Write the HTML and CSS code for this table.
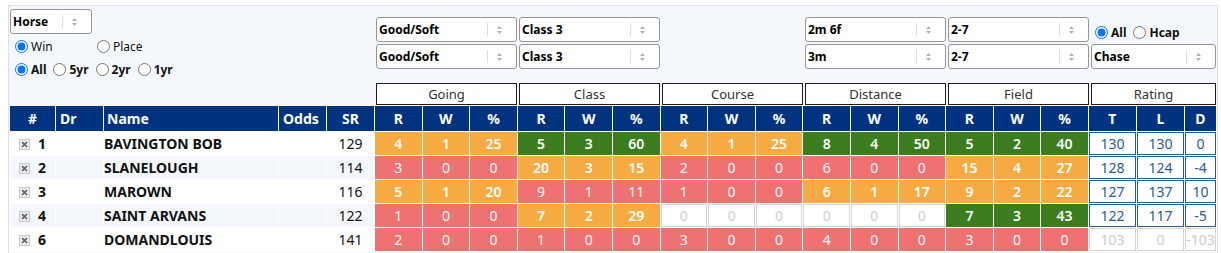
FILE: index.html
```html
<!DOCTYPE html>
<html>
<head>
<meta charset="utf-8">
<link rel="stylesheet" href="styles.css">
</head>
<body>
<div class="panel">
  <div class="controls">
    <div class="left-controls">
      <div class="sel sel-horse"><span class="sel-text">Horse</span><span class="sel-sep"></span><svg class="sel-arr" width="7" height="10" viewBox="0 0 7 10"><path d="M1 4 L3.5 1 L6 4Z M1 6 L3.5 9 L6 6Z" fill="#b3b3b3"/></svg></div>
      <div class="radio-row r1">
        <label class="opt w80"><input type="radio" name="wp" checked><span>Win</span></label>
        <label class="opt"><input type="radio" name="wp"><span>Place</span></label>
      </div>
      <div class="radio-row r2 bold">
        <label class="opt"><input type="radio" name="yr" checked><span>All</span></label>
        <label class="opt"><input type="radio" name="yr"><span>5yr</span></label>
        <label class="opt"><input type="radio" name="yr"><span>2yr</span></label>
        <label class="opt"><input type="radio" name="yr"><span>1yr</span></label>
      </div>
    </div>
    <div class="selects">
      <div class="sel"><span class="sel-text">Good/Soft</span><span class="sel-sep"></span><svg class="sel-arr" width="7" height="10" viewBox="0 0 7 10"><path d="M1 4 L3.5 1 L6 4Z M1 6 L3.5 9 L6 6Z" fill="#b3b3b3"/></svg></div>
      <div class="sel"><span class="sel-text">Class 3</span><span class="sel-sep"></span><svg class="sel-arr" width="7" height="10" viewBox="0 0 7 10"><path d="M1 4 L3.5 1 L6 4Z M1 6 L3.5 9 L6 6Z" fill="#b3b3b3"/></svg></div>
      <div class="blank"></div>
      <div class="sel"><span class="sel-text">2m 6f</span><span class="sel-sep"></span><svg class="sel-arr" width="7" height="10" viewBox="0 0 7 10"><path d="M1 4 L3.5 1 L6 4Z M1 6 L3.5 9 L6 6Z" fill="#b3b3b3"/></svg></div>
      <div class="sel"><span class="sel-text">2-7</span><span class="sel-sep"></span><svg class="sel-arr" width="7" height="10" viewBox="0 0 7 10"><path d="M1 4 L3.5 1 L6 4Z M1 6 L3.5 9 L6 6Z" fill="#b3b3b3"/></svg></div>
      <div class="radio-row r3 bold">
        <label class="opt"><input type="radio" name="hc" checked><span>All</span></label>
        <label class="opt"><input type="radio" name="hc"><span>Hcap</span></label>
      </div>
      <div class="sel"><span class="sel-text">Good/Soft</span><span class="sel-sep"></span><svg class="sel-arr" width="7" height="10" viewBox="0 0 7 10"><path d="M1 4 L3.5 1 L6 4Z M1 6 L3.5 9 L6 6Z" fill="#b3b3b3"/></svg></div>
      <div class="sel"><span class="sel-text">Class 3</span><span class="sel-sep"></span><svg class="sel-arr" width="7" height="10" viewBox="0 0 7 10"><path d="M1 4 L3.5 1 L6 4Z M1 6 L3.5 9 L6 6Z" fill="#b3b3b3"/></svg></div>
      <div class="blank"></div>
      <div class="sel"><span class="sel-text">3m</span><span class="sel-sep"></span><svg class="sel-arr" width="7" height="10" viewBox="0 0 7 10"><path d="M1 4 L3.5 1 L6 4Z M1 6 L3.5 9 L6 6Z" fill="#b3b3b3"/></svg></div>
      <div class="sel"><span class="sel-text">2-7</span><span class="sel-sep"></span><svg class="sel-arr" width="7" height="10" viewBox="0 0 7 10"><path d="M1 4 L3.5 1 L6 4Z M1 6 L3.5 9 L6 6Z" fill="#b3b3b3"/></svg></div>
      <div class="sel"><span class="sel-text">Chase</span><span class="sel-sep"></span><svg class="sel-arr" width="7" height="10" viewBox="0 0 7 10"><path d="M1 4 L3.5 1 L6 4Z M1 6 L3.5 9 L6 6Z" fill="#b3b3b3"/></svg></div>
    </div>
  </div>

  <div class="groups">
    <div>Going</div>
    <div>Class</div>
    <div>Course</div>
    <div>Distance</div>
    <div>Field</div>
    <div>Rating</div>
  </div>

  <table class="grid">
    <colgroup>
      <col class="c-num"><col class="c-dr"><col class="c-name"><col class="c-odds"><col class="c-sr">
      <col class="c-st"><col class="c-st"><col class="c-st">
      <col class="c-st"><col class="c-st"><col class="c-st">
      <col class="c-st"><col class="c-st"><col class="c-st">
      <col class="c-st"><col class="c-st"><col class="c-st">
      <col class="c-st"><col class="c-st"><col class="c-st">
      <col class="c-t"><col class="c-l"><col class="c-d">
    </colgroup>
    <thead>
      <tr>
        <th>#</th><th class="left">Dr</th><th class="left name-h">Name</th><th class="left">Odds</th><th>SR</th>
        <th>R</th><th>W</th><th>%</th>
        <th>R</th><th>W</th><th>%</th>
        <th>R</th><th>W</th><th>%</th>
        <th>R</th><th>W</th><th>%</th>
        <th>R</th><th>W</th><th>%</th>
        <th>T</th><th>L</th><th>D</th>
      </tr>
    </thead>
    <tbody>
      <tr>
        <td class="num"><svg class="xbox" width="11" height="11" viewBox="0 0 11 11"><rect x="0.5" y="0.5" width="10" height="10" fill="#ececec" stroke="#c8c8c8"/><path d="M3 3 L8 8 M8 3 L3 8" stroke="#5a5a5a" stroke-width="1.6"/></svg>1</td>
        <td></td><td class="name">BAVINGTON BOB</td><td></td><td>129</td>
        <td class="o">4</td><td class="o">1</td><td class="o">25</td>
        <td class="g">5</td><td class="g">3</td><td class="g">60</td>
        <td class="o">4</td><td class="o">1</td><td class="o">25</td>
        <td class="g">8</td><td class="g">4</td><td class="g">50</td>
        <td class="g">5</td><td class="g">2</td><td class="g">40</td>
        <td class="rt">130</td><td class="rt">130</td><td class="rt">0</td>
      </tr>
      <tr class="alt">
        <td class="num"><svg class="xbox" width="11" height="11" viewBox="0 0 11 11"><rect x="0.5" y="0.5" width="10" height="10" fill="#ececec" stroke="#c8c8c8"/><path d="M3 3 L8 8 M8 3 L3 8" stroke="#5a5a5a" stroke-width="1.6"/></svg>2</td>
        <td></td><td class="name">SLANELOUGH</td><td></td><td>114</td>
        <td class="r">3</td><td class="r">0</td><td class="r">0</td>
        <td class="o">20</td><td class="o">3</td><td class="o">15</td>
        <td class="r">2</td><td class="r">0</td><td class="r">0</td>
        <td class="r">6</td><td class="r">0</td><td class="r">0</td>
        <td class="o">15</td><td class="o">4</td><td class="o">27</td>
        <td class="rt">128</td><td class="rt">124</td><td class="rt">-4</td>
      </tr>
      <tr>
        <td class="num"><svg class="xbox" width="11" height="11" viewBox="0 0 11 11"><rect x="0.5" y="0.5" width="10" height="10" fill="#ececec" stroke="#c8c8c8"/><path d="M3 3 L8 8 M8 3 L3 8" stroke="#5a5a5a" stroke-width="1.6"/></svg>3</td>
        <td></td><td class="name">MAROWN</td><td></td><td>116</td>
        <td class="o">5</td><td class="o">1</td><td class="o">20</td>
        <td class="r">9</td><td class="r">1</td><td class="r">11</td>
        <td class="r">1</td><td class="r">0</td><td class="r">0</td>
        <td class="o">6</td><td class="o">1</td><td class="o">17</td>
        <td class="o">9</td><td class="o">2</td><td class="o">22</td>
        <td class="rt">127</td><td class="rt">137</td><td class="rt">10</td>
      </tr>
      <tr class="alt">
        <td class="num"><svg class="xbox" width="11" height="11" viewBox="0 0 11 11"><rect x="0.5" y="0.5" width="10" height="10" fill="#ececec" stroke="#c8c8c8"/><path d="M3 3 L8 8 M8 3 L3 8" stroke="#5a5a5a" stroke-width="1.6"/></svg>4</td>
        <td></td><td class="name">SAINT ARVANS</td><td></td><td>122</td>
        <td class="r">1</td><td class="r">0</td><td class="r">0</td>
        <td class="o">7</td><td class="o">2</td><td class="o">29</td>
        <td class="e">0</td><td class="e">0</td><td class="e">0</td>
        <td class="e">0</td><td class="e">0</td><td class="e">0</td>
        <td class="g">7</td><td class="g">3</td><td class="g">43</td>
        <td class="rt">122</td><td class="rt">117</td><td class="rt">-5</td>
      </tr>
      <tr>
        <td class="num"><svg class="xbox" width="11" height="11" viewBox="0 0 11 11"><rect x="0.5" y="0.5" width="10" height="10" fill="#ececec" stroke="#c8c8c8"/><path d="M3 3 L8 8 M8 3 L3 8" stroke="#5a5a5a" stroke-width="1.6"/></svg>6</td>
        <td></td><td class="name">DOMANDLOUIS</td><td></td><td>141</td>
        <td class="r">2</td><td class="r">0</td><td class="r">0</td>
        <td class="r">1</td><td class="r">0</td><td class="r">0</td>
        <td class="r">3</td><td class="r">0</td><td class="r">0</td>
        <td class="r">4</td><td class="r">0</td><td class="r">0</td>
        <td class="r">3</td><td class="r">0</td><td class="r">0</td>
        <td class="rt dim">103</td><td class="rt dim">0</td><td class="rt dim">-103</td>
      </tr>
    </tbody>
  </table>
</div>
</body>
</html>
```
FILE: styles.css
```css
html, body {
  margin: 0;
  padding: 0;
  background: #ffffff;
}

body {
  font-family: "Noto Sans", "Open Sans", sans-serif;
  color: #111;
}

.panel {
  margin: 5px 0 0 8px;
  width: 1210px;
  box-sizing: border-box;
  border: 1px solid #dde1e7;
  border-bottom: none;
  background: #f4f7fc;
  padding-bottom: 12px;
}

.controls {
  display: flex;
  height: 70px;
}

.left-controls {
  width: 367px;
  box-sizing: border-box;
  padding: 3px 0 0 1px;
  flex: none;
}

.sel {
  display: flex;
  align-items: center;
  height: 25px;
  box-sizing: border-box;
  border: 1px solid #959595;
  border-radius: 3px;
  background: #fff;
  padding: 0 13px 0 2px;
  font-size: 12px;
  font-weight: 700;
  color: #000;
}

.sel-horse {
  width: 82px;
  margin-left: 0;
}

.sel-text {
  flex: 1;
  white-space: nowrap;
  overflow: hidden;
}

.sel-sep {
  width: 1px;
  height: 13px;
  background: #dcdcdc;
  margin-right: 8px;
  flex: none;
}

.sel-arr {
  display: block;
  flex: none;
}

.radio-row {
  display: flex;
  align-items: center;
  height: 13px;
  font-size: 12px;
  gap: 2px;
}

.radio-row.bold {
  font-weight: 700;
}

.r1 {
  margin-top: 6px;
}

.r2 {
  margin-top: 10px;
}

.r3 {
  align-self: start;
  margin-top: 9px;
  gap: 3px;
}

.opt {
  display: flex;
  align-items: center;
  white-space: nowrap;
}

.w80 {
  width: 80px;
}

.opt input {
  margin: 0 3px 0 5px;
  width: 13px;
  height: 13px;
}

.r3 .opt input {
  margin-left: 4px;
}

.selects {
  display: grid;
  grid-template-columns: repeat(5, 141px) 125px;
  grid-template-rows: 25px 25px;
  column-gap: 2px;
  row-gap: 2px;
  margin-top: 11px;
}

.groups {
  display: grid;
  grid-template-columns: repeat(5, 141px) 125px;
  column-gap: 2px;
  margin: 7px 0 0 367px;
}

.groups div {
  height: 22px;
  box-sizing: border-box;
  border: 1px solid #1e1e1e;
  background: #fff;
  text-align: center;
  font-size: 13px;
  line-height: 20px;
  color: #333;
}

.grid {
  border-collapse: separate;
  border-spacing: 1px;
  table-layout: fixed;
  width: 1208px;
  background: #fff;
  font-size: 14px;
}

.c-num { width: 45px; }
.c-dr { width: 47px; }
.c-name { width: 174px; }
.c-odds { width: 47px; }
.c-sr { width: 47px; }
.c-st { width: 46.6px; }
.c-t { width: 47px; }
.c-l { width: 47px; }
.c-d { width: 31px; }

.grid th {
  background: #00337f;
  color: #fff;
  font-weight: 700;
  height: 25px;
  padding: 0;
  text-align: center;
  line-height: 18px;
}

.grid th.left {
  text-align: left;
  padding-left: 4px;
}

.grid th.name-h {
  padding-left: 3px;
}

.grid tbody tr {
  height: 23px;
}

.grid td {
  padding: 0;
  text-align: center;
  line-height: 18px;
  white-space: nowrap;
  background: #fff;
  color: #111;
}

.grid tr.alt td {
  background: #f4f7fc;
}

.grid td.num {
  text-align: left;
  padding-left: 9px;
  font-weight: 700;
}

.xbox {
  vertical-align: -1px;
  margin-right: 8px;
}

.grid td.name {
  text-align: left;
  font-weight: 700;
}

.grid td.o,
.grid tr.alt td.o {
  background: #f5ab42;
  color: #fff;
  font-weight: 600;
}

.grid td.g,
.grid tr.alt td.g {
  background: #3b7d1f;
  color: #fff;
  font-weight: 600;
}

.grid td.r,
.grid tr.alt td.r {
  background: #ef7171;
  color: #fff;
}

.grid td.e,
.grid tr.alt td.e {
  background: #fff;
  border: 1px solid #d4d4d4;
  color: #cfcfcf;
}

.grid td.rt,
.grid tr.alt td.rt {
  background: #fff;
  border: 1px solid #2a5b98;
  color: #2a5b98;
}

.grid td.rt.dim {
  border-color: #d4d4d4;
  color: #cccccc;
}
```
